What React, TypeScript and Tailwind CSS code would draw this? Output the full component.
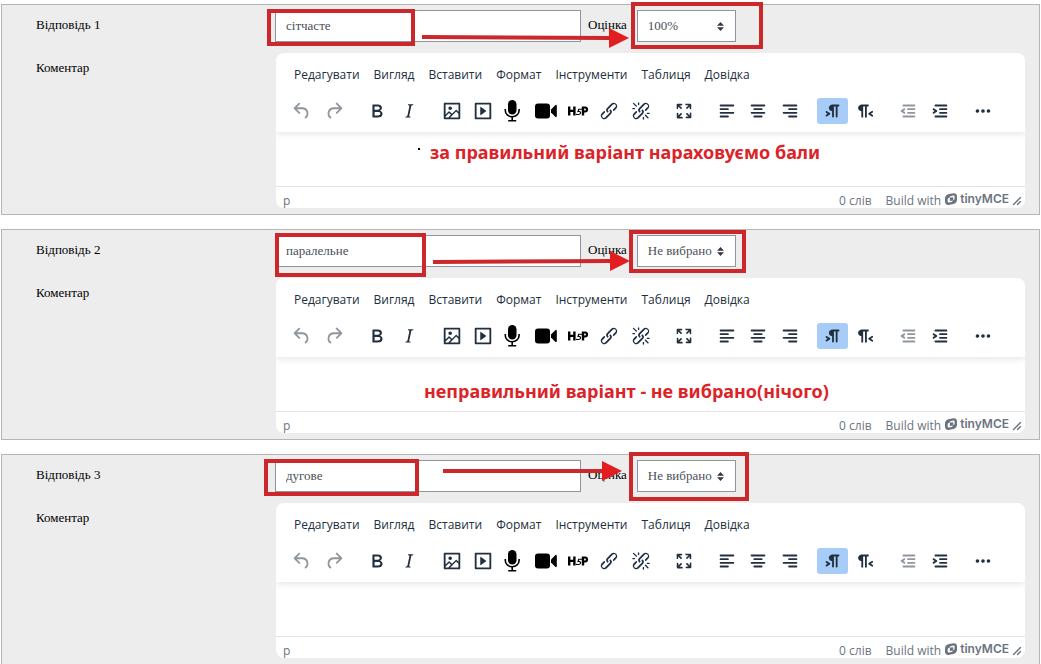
import type { ReactNode } from "react";

const PATHS = {
  undo: "M6.4 8H12c3.7 0 6.2 2 6.8 5.1.6 2.7-.4 5.6-2.3 6.8a1 1 0 0 1-1-1.8c1.1-.6 1.8-2.7 1.4-4.6-.5-2.1-2.1-3.5-4.9-3.5H6.4l3.3 3.3a1 1 0 1 1-1.4 1.4l-5-5a1 1 0 0 1 0-1.4l5-5a1 1 0 0 1 1.4 1.4L6.4 8Z",
  redo: "M17.6 10H12c-2.8 0-4.4 1.4-4.9 3.5-.4 2 .3 4 1.4 4.6a1 1 0 1 1-1 1.8c-2-1.2-2.9-4.1-2.3-6.8.6-3 3-5.1 6.8-5.1h5.6l-3.3-3.3a1 1 0 1 1 1.4-1.4l5 5a1 1 0 0 1 0 1.4l-5 5a1 1 0 0 1-1.4-1.4l3.3-3.3Z",
  bold: "M7.8 19c-.3 0-.5 0-.6-.2l-.2-.5V5.7c0-.2 0-.4.2-.5l.6-.2h5c1.5 0 2.7.3 3.5 1 .7.6 1.1 1.4 1.1 2.5a3 3 0 0 1-.6 1.9c-.4.6-1 1-1.6 1.2.4.1.9.3 1.3.6s.8.7 1 1.2c.4.4.5 1 .5 1.6 0 1.3-.4 2.3-1.3 3-.8.7-2.1 1-3.8 1H7.8Zm5-8.3c.6 0 1.2-.1 1.6-.5.4-.3.6-.7.6-1.3 0-1.1-.8-1.7-2.3-1.7H9.3v3.5h3.4Zm.5 6c.7 0 1.3-.1 1.7-.4.4-.4.6-.9.6-1.5s-.2-1-.7-1.4c-.4-.3-1-.4-2-.4H9.4v3.8h4Z",
  italic: "m16.7 4.7-.1.9h-.3c-.6 0-1 0-1.4.3-.3.3-.4.6-.5 1.1l-2.1 9.8v.6c0 .5.4.8 1.4.8h.2l-.2.8H8l.2-.8h.2c1.1 0 1.8-.5 2-1.5l2-9.8.1-.5c0-.6-.4-.8-1.4-.8h-.3l.2-.9h5.8Z",
  image: "m5 15.7 3.3-3.2c.3-.3.7-.3 1 0L12 15l4.1-4c.3-.4.8-.4 1 0l2 1.9V5H5v10.7ZM5 18V19h3l2.8-2.9-2-2L5 17.9Zm14-3-2.5-2.4-6.4 6.5H19v-4ZM4 3h16c.6 0 1 .4 1 1v16c0 .6-.4 1-1 1H4a1 1 0 0 1-1-1V4c0-.6.4-1 1-1Zm6 8a2 2 0 1 0 0-4 2 2 0 0 0 0 4Z",
  media: "M4 3h16c.6 0 1 .4 1 1v16c0 .6-.4 1-1 1H4a1 1 0 0 1-1-1V4c0-.6.4-1 1-1Zm1 2v14h14V5H5Zm4.8 2.6 5.6 4a.5.5 0 0 1 0 .8l-5.6 4A.5.5 0 0 1 9 16V8a.5.5 0 0 1 .8-.4Z",
  link: "M6.2 12.3a1 1 0 0 1 1.4 1.4l-2 2a2 2 0 1 0 2.6 2.8l4.8-4.8a1 1 0 0 0 0-1.4 1 1 0 1 1 1.4-1.3 2.9 2.9 0 0 1 0 4L9.6 20a3.9 3.9 0 0 1-5.5-5.5l2-2Zm11.6-.6a1 1 0 0 1-1.4-1.4l2-2a2 2 0 1 0-2.6-2.8L11 10.3a1 1 0 0 0 0 1.4A1 1 0 1 1 9.6 13a2.9 2.9 0 0 1 0-4L14.4 4a3.9 3.9 0 0 1 5.5 5.5l-2 2Z",
  unlink: "M6.2 12.3a1 1 0 0 1 1.4 1.4l-2 2a2 2 0 1 0 2.6 2.8l4.8-4.8a1 1 0 0 0 0-1.4 1 1 0 1 1 1.4-1.3 2.9 2.9 0 0 1 0 4L9.6 20a3.9 3.9 0 0 1-5.5-5.5l2-2Zm11.6-.6a1 1 0 0 1-1.4-1.4l2.1-2a2 2 0 1 0-2.7-2.8L11 10.3a1 1 0 0 0 0 1.4A1 1 0 1 1 9.6 13a2.9 2.9 0 0 1 0-4L14.4 4a3.9 3.9 0 0 1 5.5 5.5l-2 2ZM7.6 6.3a.8.8 0 0 1-1 1.1L3.3 4.2a.7.7 0 1 1 1-1l3.2 3.1ZM5.1 8.6a.8.8 0 0 1 0 1.5H3a.8.8 0 0 1 0-1.5H5Zm5-3.5a.8.8 0 0 1-1.5 0V3a.8.8 0 0 1 1.5 0V5Zm6 11.8a.8.8 0 0 1 1-1l3.2 3.2a.8.8 0 0 1-1 1L16 17Zm-2.2 2a.8.8 0 0 1 1.5 0V21a.8.8 0 0 1-1.5 0V19Zm5-3.5a.7.7 0 1 1 0-1.5H21a.8.8 0 0 1 0 1.5H19Z",
  fullscreen: "m15.3 10-1.2-1.3 2.9-3h-2.3a.9.9 0 1 1 0-1.7H19c.5 0 .9.4.9.9v4.4a.9.9 0 1 1-1.8 0V7l-2.9 3Zm0 4 3 3v-2.3a.9.9 0 1 1 1.7 0V19c0 .5-.4.9-.9.9h-4.4a.9.9 0 1 1 0-1.8H17l-3-2.9 1.3-1.2ZM10 15.4l-2.900 3h2.300a.9.9 0 1 1 0 1.700H5a.9.9 0 0 1-.9-.9v-4.400a.9.9 0 1 1 1.800 0V17l2.900-3 1.200 1.300ZM8.700 10 5.700 7v2.300a.9.9 0 0 1-1.700 0V5c0-.5.4-.9.9-.9h4.400a.9.9 0 0 1 0 1.800H7l3 2.900-1.300 1.200Z",
  alignLeft: "M5 5h14c.6 0 1 .4 1 1s-.4 1-1 1H5a1 1 0 1 1 0-2Zm0 4h8c.6 0 1 .4 1 1s-.4 1-1 1H5a1 1 0 1 1 0-2Zm0 8h8c.6 0 1 .4 1 1s-.4 1-1 1H5a1 1 0 0 1 0-2Zm0-4h14c.6 0 1 .4 1 1s-.4 1-1 1H5a1 1 0 0 1 0-2Z",
  alignCenter: "M5 5h14c.6 0 1 .4 1 1s-.4 1-1 1H5a1 1 0 1 1 0-2Zm3 4h8c.6 0 1 .4 1 1s-.4 1-1 1H8a1 1 0 1 1 0-2Zm0 8h8c.6 0 1 .4 1 1s-.4 1-1 1H8a1 1 0 0 1 0-2Zm-3-4h14c.6 0 1 .4 1 1s-.4 1-1 1H5a1 1 0 0 1 0-2Z",
  alignRight: "M5 5h14c.6 0 1 .4 1 1s-.4 1-1 1H5a1 1 0 1 1 0-2Zm6 4h8c.6 0 1 .4 1 1s-.4 1-1 1h-8a1 1 0 0 1 0-2Zm0 8h8c.6 0 1 .4 1 1s-.4 1-1 1h-8a1 1 0 0 1 0-2Zm-6-4h14c.6 0 1 .4 1 1s-.4 1-1 1H5a1 1 0 0 1 0-2Z",
  ltr: "M11 5h7a1 1 0 0 1 0 2h-1v11a1 1 0 0 1-2 0V7h-2v11a1 1 0 0 1-2 0v-6c-.5 0-1 0-1.4-.3A3.4 3.4 0 0 1 7.8 10a3.3 3.3 0 0 1 0-2.8 3.4 3.4 0 0 1 1.8-1.8L11 5ZM4.400 16.200 6.200 15l-1.800-1.200a1 1 0 0 1 1.200-1.600l3 2a1 1 0 0 1 0 1.600l-3 2a1 1 0 1 1-1.200-1.600Z",
  rtl: "M8 5h8v2h-2v12h-2V7h-2v12H8v-7c-.5 0-1 0-1.4-.3A3.4 3.4 0 0 1 4.8 10a3.3 3.3 0 0 1 0-2.8 3.4 3.4 0 0 1 1.8-1.8L8 5Zm12 11.2a1 1 0 1 1-1 1.6l-3-2a1 1 0 0 1 0-1.6l3-2a1 1 0 1 1 1 1.6L18.4 15l1.8 1.2Z",
  outdent: "M7 5h12c.6 0 1 .4 1 1s-.4 1-1 1H7a1 1 0 1 1 0-2Zm5 4h7c.6 0 1 .4 1 1s-.4 1-1 1h-7a1 1 0 0 1 0-2Zm0 4h7c.6 0 1 .4 1 1s-.4 1-1 1h-7a1 1 0 0 1 0-2Zm-5 4h12a1 1 0 0 1 0 2H7a1 1 0 0 1 0-2Zm1.600-3.800a1 1 0 0 1-1.200 1.600l-3-2a1 1 0 0 1 0-1.600l3-2a1 1 0 0 1 1.200 1.600L6.800 12l1.800 1.200Z",
  indent: "M7 5h12c.6 0 1 .4 1 1s-.4 1-1 1H7a1 1 0 1 1 0-2Zm5 4h7c.6 0 1 .4 1 1s-.4 1-1 1h-7a1 1 0 0 1 0-2Zm0 4h7c.6 0 1 .4 1 1s-.4 1-1 1h-7a1 1 0 0 1 0-2Zm-5 4h12a1 1 0 0 1 0 2H7a1 1 0 0 1 0-2Zm-2.600-3.800L6.200 12l-1.800-1.200a1 1 0 0 1 1.200-1.600l3 2a1 1 0 0 1 0 1.600l-3 2a1 1 0 1 1-1.200-1.600Z",
  more: "M6 10a2 2 0 0 0-2 2c0 1.1.9 2 2 2a2 2 0 0 0 2-2 2 2 0 0 0-2-2Zm12 0a2 2 0 0 0-2 2c0 1.1.9 2 2 2a2 2 0 0 0 2-2 2 2 0 0 0-2-2Zm-6 0a2 2 0 0 0-2 2c0 1.1.9 2 2 2a2 2 0 0 0 2-2 2 2 0 0 0-2-2Z",
};

function Glyph({ name }: { name: keyof typeof PATHS }) {
  return (
    <svg viewBox="0 0 24 24" className="size-[22px]" fill="currentColor" fillRule="evenodd" aria-hidden="true">
      <path d={PATHS[name]} />
    </svg>
  );
}

function Microphone() {
  return (
    <svg viewBox="0 0 22 22" className="size-[22px] text-black" aria-hidden="true">
      <rect x="4" y="0" width="8.500" height="14.500" rx="4.250" fill="currentColor" />
      <path d="M1.300 9v1.500a6.900 6.300 0 0 0 13.800 0V9M8.200 17v3.500M4.200 20.800h8" fill="none" stroke="currentColor" strokeWidth="1.600" />
    </svg>
  );
}

function Camera() {
  return (
    <svg viewBox="0 0 22 16" className="h-4 w-[22px] text-black" fill="currentColor" aria-hidden="true">
      <rect x="0" y="0.5" width="15" height="15" rx="3" />
      <path d="M16 6.500 20 2.400c1-1 1.800-.6 1.800.6v10c0 1.200-.8 1.600-1.800.6L16 9.500Z" />
    </svg>
  );
}

function H5P() {
  return (
    <svg viewBox="0 0 22 12" className="h-3 w-[22px] text-black" aria-hidden="true">
      <path
        d="M1 1.500h2.400v3.300h2.800V1.500h2.400v9H6.200V6.900H3.400v3.600H1ZM14.800 1.500h3.300a3 3 0 0 1 0 6h-.9v3h-2.400Zm2.400 2v2.100h.7a1 1 0 0 0 0-2.100Z"
        fill="currentColor"
        fillRule="evenodd"
      />
      <path d="M15 4.300h-3.400L11 6.500c1.700-.3 2.700.3 2.600 1.500-.1 1.300-1.600 1.700-4.600 1.400" fill="none" stroke="currentColor" strokeWidth="1.100" />
    </svg>
  );
}

type Tool = { label: string; icon: ReactNode; disabled?: boolean; active?: boolean };

const TOOL_GROUPS: { width: string; tools: Tool[] }[] = [
  {
    width: "w-[63px]",
    tools: [
      { label: "Скасувати", icon: <Glyph name="undo" />, disabled: true },
      { label: "Повторити", icon: <Glyph name="redo" />, disabled: true },
    ],
  },
  {
    width: "w-[63px]",
    tools: [
      { label: "Жирний", icon: <Glyph name="bold" /> },
      { label: "Курсив", icon: <Glyph name="italic" /> },
    ],
  },
  {
    width: "w-[220px]",
    tools: [
      { label: "Зображення", icon: <Glyph name="image" /> },
      { label: "Медіа", icon: <Glyph name="media" /> },
      { label: "Записати аудіо", icon: <Microphone /> },
      { label: "Записати відео", icon: <Camera /> },
      { label: "Вставити H5P", icon: <H5P /> },
      { label: "Посилання", icon: <Glyph name="link" /> },
      { label: "Видалити посилання", icon: <Glyph name="unlink" /> },
    ],
  },
  { width: "w-[31px]", tools: [{ label: "На весь екран", icon: <Glyph name="fullscreen" /> }] },
  {
    width: "w-[94px]",
    tools: [
      { label: "Ліворуч", icon: <Glyph name="alignLeft" /> },
      { label: "По центру", icon: <Glyph name="alignCenter" /> },
      { label: "Праворуч", icon: <Glyph name="alignRight" /> },
    ],
  },
  {
    width: "w-[63px]",
    tools: [
      { label: "Зліва направо", icon: <Glyph name="ltr" />, active: true },
      { label: "Справа наліво", icon: <Glyph name="rtl" /> },
    ],
  },
  {
    width: "w-[63px]",
    tools: [
      { label: "Зменшити відступ", icon: <Glyph name="outdent" />, disabled: true },
      { label: "Збільшити відступ", icon: <Glyph name="indent" /> },
    ],
  },
  { width: "w-[31px]", tools: [{ label: "Більше", icon: <Glyph name="more" /> }] },
];

const MENUS = ["Редагувати", "Вигляд", "Вставити", "Формат", "Інструменти", "Таблиця", "Довідка"];

function TinyLogo() {
  return (
    <span className="flex items-center gap-[3px]">
      <svg viewBox="0 0 12 12" className="size-3" aria-hidden="true">
        <path
          d="M4.200.9 8.500.2C10.500 0 12 1.300 12 3.300v3.500c0 2.300-1.400 3.900-3.800 4.300l-4.700.8C1.500 12.100 0 10.800 0 8.700V5.300C0 3 1.700 1.300 4.200.9Z"
          fill="currentColor"
        />
        <path d="M6.400 3 8.700 2.600c.5 0 .9.300.9.900v2.300c0 .7-.4 1.100-1.100 1.200l-.7.100v.5c0 .7-.5 1.200-1.100 1.300L3.700 9.400c-.6 0-1-.3-1-.9V6.300c0-.7.4-1.100 1-1.200l.9-.2v-.4c0-.8.700-1.400 1.800-1.500Z" fill="white" />
        <path d="M5.500 4.600 7.600 4.200c.4 0 .7.300.7.600v1.900c0 .5-.3.800-.7.900l-2 .3c-.5.100-.8-.2-.8-.6V5.500c0-.5.300-.8.700-.9Z" fill="currentColor" />
      </svg>
      <span className="font-[Inter,sans-serif] text-[12px] leading-4 font-semibold">tinyMCE</span>
    </span>
  );
}

function Editor({ label }: { label: string }) {
  return (
    <div
      role="group"
      aria-label={label}
      className="flex h-[155px] min-w-0 flex-1 flex-col overflow-hidden rounded-[8px] bg-white font-['Open_Sans',sans-serif] text-[#222f3e]"
    >
      <div className="relative h-[79px] flex-none shadow-[0_2px_6px_rgba(34,47,62,0.12)]">
        <div role="menubar" className="flex h-10 items-center gap-[14px] pt-1 pl-[18px]">
          {MENUS.map((menu) => (
            <button key={menu} type="button" role="menuitem" className="text-[12px] leading-4">
              {menu}
            </button>
          ))}
        </div>
        <div role="toolbar" aria-label="Форматування" className="flex h-9 items-center gap-3 pl-[10px]">
          {TOOL_GROUPS.map((group, index) => (
            <div key={index} className={`flex flex-none justify-between ${group.width}`}>
              {group.tools.map((tool) => (
                <button
                  key={tool.label}
                  type="button"
                  aria-label={tool.label}
                  disabled={tool.disabled}
                  className={`flex h-[26px] w-[31px] flex-none items-center justify-center rounded-[3px] ${
                    tool.active ? "bg-[#a6ccf7]" : ""
                  } ${tool.disabled ? "opacity-50" : ""}`}
                >
                  {tool.icon}
                </button>
              ))}
            </div>
          ))}
        </div>
      </div>
      <div role="textbox" aria-multiline="true" aria-label={label} contentEditable suppressContentEditableWarning className="flex-1 outline-none" />
      <div className="flex h-[22px] flex-none items-center border-t border-[#e3e3e3] pt-[6px] pr-[3px] pl-[7px] text-[12px] leading-4 text-[#6b747e]">
        <span>p</span>
        <span className="ml-auto">0 слів</span>
        <span className="ml-[14px]">Build with</span>
        <span className="ml-1 pb-[3px]">
          <TinyLogo />
        </span>
        <svg viewBox="0 0 10 10" className="ml-[3px] size-[10px]" fill="currentColor" aria-hidden="true">
          <path d="M8.100 1.100A.5.5 0 1 1 9 2l-7 7A.5.5 0 1 1 1 8l7-7ZM8.100 5.100A.5.5 0 1 1 9 6l-3 3A.5.5 0 1 1 5 8l3-3Z" />
        </svg>
      </div>
    </div>
  );
}

type Box = { x: number; y: number; w: number; h: number };
type Answer = {
  number: number;
  text: string;
  grade: string;
  boxes: Box[];
  arrow: { x1: number; y1: number; x2: number; y2: number };
  note?: ReactNode;
};

const NOTE = "pointer-events-none absolute z-20 font-['Noto_Sans',sans-serif] text-[18px] leading-6 font-bold whitespace-nowrap text-[#dc2328]";

const ANSWERS: Answer[] = [
  {
    number: 1,
    text: "сітчасте",
    grade: "100%",
    boxes: [
      { x: 265, y: 4, w: 148, h: 37 },
      { x: 629, y: -3, w: 132, h: 47 },
    ],
    arrow: { x1: 420, y1: 32, x2: 627, y2: 33 },
    note: (
      <>
        <span className="pointer-events-none absolute top-[143px] left-[416px] z-20 size-[2px] bg-black" />
        <p className={`${NOTE} top-[135px] left-[428px]`}>за правильний варіант нараховуємо бали</p>
      </>
    ),
  },
  {
    number: 2,
    text: "паралельне",
    grade: "Не вибрано",
    boxes: [
      { x: 273, y: 3, w: 151, h: 44 },
      { x: 627, y: 0, w: 117, h: 43 },
    ],
    arrow: { x1: 431, y1: 32, x2: 628, y2: 31 },
    note: <p className={`${NOTE} top-[149px] left-[422px]`}>неправильний варіант - не вибрано(нічого)</p>,
  },
  {
    number: 3,
    text: "дугове",
    grade: "Не вибрано",
    boxes: [
      { x: 262, y: 4, w: 155, h: 37 },
      { x: 627, y: -3, w: 120, h: 49 },
    ],
    arrow: { x1: 441, y1: 16, x2: 620, y2: 16 },
  },
];

function Marks({ boxes, arrow }: Pick<Answer, "boxes" | "arrow">) {
  const { x1, y1, x2, y2 } = arrow;
  return (
    <svg className="pointer-events-none absolute inset-0 z-10 size-full overflow-visible" aria-hidden="true">
      {boxes.map((b) => (
        <rect key={b.x} x={b.x + 2} y={b.y + 2} width={b.w - 4} height={b.h - 4} fill="none" stroke="#cc272b" strokeWidth="4" />
      ))}
      <line x1={x1} y1={y1} x2={x2 - 18} y2={y2} stroke="#cc272b" strokeWidth="4" />
      <polygon points={`${x2 - 20},${y2 - 10} ${x2},${y2} ${x2 - 20},${y2 + 10}`} fill="#e31e20" />
    </svg>
  );
}

function AnswerPanel({ number, text, grade, boxes, arrow, note }: Answer) {
  return (
    <section className="relative border border-[#b5b5b5] bg-[#ededed] pt-[5px] pr-[14px] pb-[6px] pl-[34px]">
      <div className="flex h-8 items-center">
        <label htmlFor={`answer-${number}`} className="w-60 flex-none pb-[2px]">
          Відповідь {number}
        </label>
        <input
          id={`answer-${number}`}
          defaultValue={text}
          className="-ml-px h-8 w-[306px] min-w-0 border border-[#8f959e] bg-white px-[10px] text-[13px] text-[#495057]"
        />
        <label htmlFor={`grade-${number}`} className="ml-[7px] pb-[2px]">
          Оцінка
        </label>
        <div className="relative ml-[10px] h-8 w-[99px]">
          <select
            id={`grade-${number}`}
            defaultValue={grade}
            className="size-full appearance-none border border-[#8f959e] bg-white px-[10px] text-[13px] text-[#495057]"
          >
            <option>Не вибрано</option>
            <option>100%</option>
          </select>
          <svg viewBox="0 0 7 9" className="pointer-events-none absolute top-[12px] right-3 h-[9px] w-[7px]" fill="#343a40" aria-hidden="true">
            <path d="M3.500 0 7 3.800H0ZM3.500 9 0 5.200h7Z" />
          </svg>
        </div>
      </div>
      <div className="mt-[11px] flex">
        <span className="w-60 flex-none pt-[7px] leading-4">Коментар</span>
        <Editor label={`Коментар ${number}`} />
      </div>
      <Marks boxes={boxes} arrow={arrow} />
      {note}
    </section>
  );
}

export default function App() {
  return (
    <main className="flex h-screen flex-col gap-[14px] overflow-hidden bg-white pt-1 pr-px pl-px font-['Liberation_Serif',serif] text-[13px] leading-4 text-black">
      {ANSWERS.map((answer) => (
        <div key={answer.number} className="flex-none">
          <AnswerPanel {...answer} />
        </div>
      ))}
    </main>
  );
}
